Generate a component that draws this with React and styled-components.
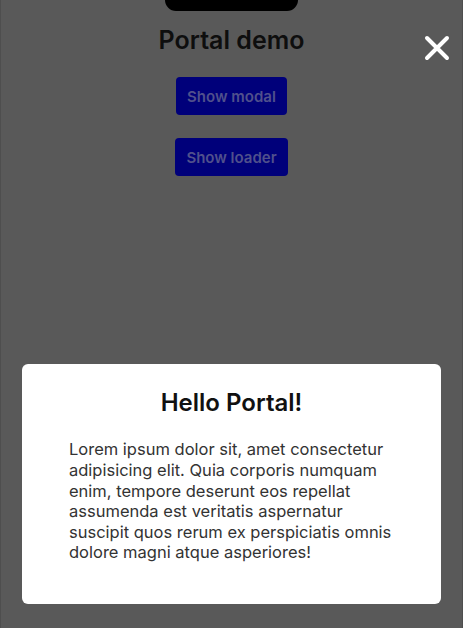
import React from "react";
import styled, { createGlobalStyle } from "styled-components";

const GlobalStyle = createGlobalStyle`
  html, body {
    margin: 0;
    padding: 0;
    height: 100%;
    background: #595959;
    font-family: Inter, "Noto Sans", "Liberation Sans", sans-serif;
  }
  #root {
    height: 100%;
  }
`;

const Page = styled.div`
  display: flex;
  flex-direction: column;
  align-items: center;
  min-height: 100%;
  box-sizing: border-box;
  border-left: 1px solid #4e4e4e;
  border-right: 1px solid #4e4e4e;
`;

const Notch = styled.div`
  width: 133px;
  height: 11px;
  background: #000;
  border-radius: 0 0 13px 13px;
`;

const Title = styled.h1`
  margin: 14px 0 0;
  font-size: 25px;
  line-height: 30px;
  font-weight: 600;
  color: #0e0e0e;
`;

const DemoButton = styled.button`
  margin-top: ${(p) => p.$top}px;
  height: 38px;
  padding: 0 11px;
  border: none;
  border-radius: 4px;
  background: #00007a;
  color: #50508c;
  font-family: inherit;
  font-size: 15px;
  font-weight: 600;
`;

const Overlay = styled.div`
  position: fixed;
  inset: 0;
  display: flex;
  flex-direction: column;
  justify-content: flex-end;
  padding: 0 22px 24px;
`;

const CloseButton = styled.button`
  position: absolute;
  top: 35px;
  right: 13px;
  width: 26px;
  height: 26px;
  padding: 0;
  border: none;
  background: none;
  display: flex;
`;

const Modal = styled.div`
  background: #fff;
  border-radius: 6px;
  padding: 24px 47px 41px;
`;

const ModalTitle = styled.h2`
  margin: 0;
  text-align: center;
  font-size: 24px;
  line-height: 29px;
  font-weight: 600;
  color: #111;
`;

const ModalText = styled.p`
  margin: 22px 0 0;
  font-size: 16.5px;
  line-height: 20.6px;
  color: #333;
`;

export default function App() {
  return (
    <>
      <GlobalStyle />
      <Page>
        <Notch />
        <Title>Portal demo</Title>
        <DemoButton $top={22}>Show modal</DemoButton>
        <DemoButton $top={23}>Show loader</DemoButton>
      </Page>
      <Overlay>
        <CloseButton aria-label="Close">
          <svg width="26" height="26" viewBox="0 0 26 26">
            <path
              d="M3 3 L23 23 M23 3 L3 23"
              stroke="#fff"
              strokeWidth="4"
              strokeLinecap="round"
            />
          </svg>
        </CloseButton>
        <Modal>
          <ModalTitle>Hello Portal!</ModalTitle>
          <ModalText>
            Lorem ipsum dolor sit, amet consectetur adipisicing elit. Quia
            corporis numquam enim, tempore deserunt eos repellat assumenda est
            veritatis aspernatur suscipit quos rerum ex perspiciatis omnis
            dolore magni atque asperiores!
          </ModalText>
        </Modal>
      </Overlay>
    </>
  );
}
